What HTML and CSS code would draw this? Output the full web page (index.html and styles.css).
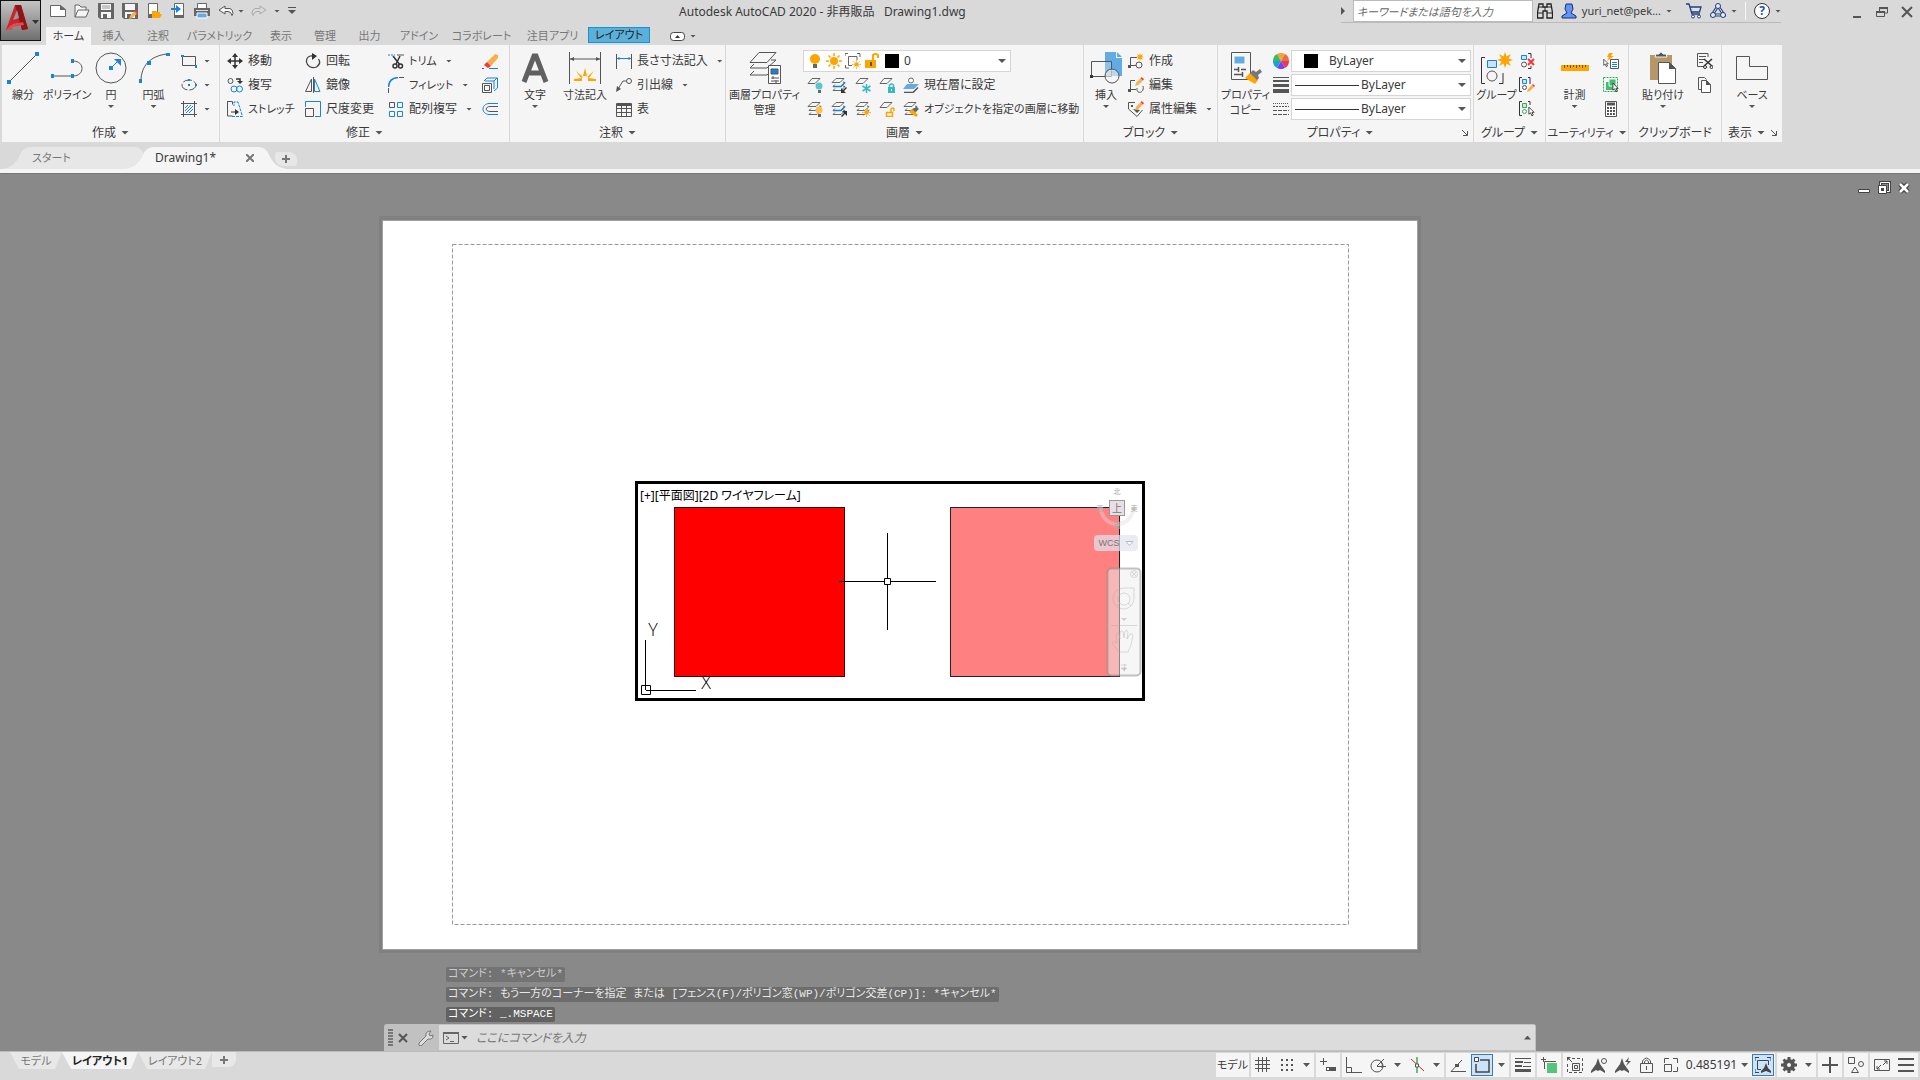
FILE: index.html
```html
<!DOCTYPE html>
<html lang="ja">
<head>
    <meta charset="UTF-8">
    <meta name="viewport" content="width=device-width, initial-scale=1.0">
    <title>Autodesk AutoCAD 2020 - Drawing1.dwg</title>
    <link rel="stylesheet" href="styles.css">
</head>
<body>

<!-- shared shapes -->
<svg class="defs" aria-hidden="true">
    <symbol id="sheets" viewBox="0 0 16 16"><path d="M5 1.5h8l-4 4H1zM12 5l2 .5-4 4H2l2-2M12 9l2 .5-4 4H2l2-2" fill="none" stroke="#666"/></symbol>
    <symbol id="pencil" viewBox="0 0 8 8"><path d="M0 8l1-3 4-4 2 2-4 4z" fill="#f7b04a"/><path d="M5 1l1-1 2 2-1 1z" fill="#f33"/></symbol>
    <symbol id="sun" viewBox="0 0 16 16"><circle cx="8" cy="8" r="4" fill="#ffa500"/><path d="M8 0v3M8 13v3M0 8h3M13 8h3M2.5 2.5l2 2M11.5 11.5l2 2M2.5 13.5l2-2M11.5 4.5l2-2" stroke="#ffa500" stroke-width="1.5"/></symbol>
    <symbol id="star" viewBox="0 0 16 16"><path d="M8 0l1.5 4.5L14 2l-2.500 4.5L16 8l-4.500 1.5L14 14l-4.500-2.500L8 16l-1.500-4.500L2 14l2.5-4.500L0 8l4.5-1.500L2 2l4.5 2.5z" fill="#ffa500"/></symbol>
    <symbol id="cursor" viewBox="0 0 8 11"><path d="M1 .5v8l2-1.500 1.5 3.5 1.5-1-1.500-3H7z" fill="#fff" stroke="#333"/></symbol>
</svg>

<header class="header">
    <button class="app-button" aria-label="アプリケーション メニュー">
        <svg width="38" height="38" viewBox="0 0 38 38"><path d="M4 28L13 3h6l7 24-6 1-2-7-7 1-2 6z" fill="#c8252c"/><path d="M13 3h6l7 24-6 1z" fill="#8f1419"/><path d="M15 8l-4 10 6-2z" fill="#999"/><path d="M4 28l5-5 12-3 1 3-11 2-2 3z" fill="#e04a4c"/><path d="M30 18h7l-3.500 4z" fill="#333"/></svg>
    </button>
    <div class="title-bar">
        <div class="quick-access">
            <button aria-label="クイック新規作成"><svg width="16" height="16" viewBox="0 0 16 16"><path d="M.5 2.5h10l5 4v7H.5z" fill="#fff" stroke="#666"/><path d="M10 2v5h6z" fill="#666"/></svg></button>
            <button aria-label="開く"><svg width="16" height="16" viewBox="0 0 16 16"><path d="M1 14V2h4l2 2h5v3M1 14L4 7h11l-3 7z" fill="#f5f5f5" stroke="#666"/></svg></button>
            <button aria-label="上書き保存"><svg width="16" height="16" viewBox="0 0 16 16"><path d="M0 0h16v16H2l-2-2z" fill="#666"/><path d="M3 1h10v6H3zM3 9h10v6H3z" fill="#f5f5f5"/><path d="M4 3h8M4 5h8" stroke="#999"/><path d="M5 11h4v4H5z" fill="#666"/></svg></button>
            <button aria-label="名前を付けて保存"><svg width="16" height="16" viewBox="0 0 16 16"><path d="M0 0h16v16H2l-2-2z" fill="#666"/><path d="M3 1h10v6H3zM3 9h10v6H3z" fill="#f5f5f5"/><path d="M5 11h4v4H5z" fill="#666"/><use href="#pencil" x="7" y="7" width="9" height="9"/></svg></button>
            <button aria-label="Web およびモバイルから開く"><svg width="16" height="16" viewBox="0 0 16 16"><path d="M2.5.5h9v14h-9z" fill="#fff" stroke="#666"/><path d="M2 11h10v4H2z" fill="#666"/><path d="M6 15V8h4l1 1h3v2h2l-2 4z" fill="#ffa500"/></svg></button>
            <button aria-label="Web およびモバイルに保存"><svg width="16" height="16" viewBox="0 0 16 16"><path d="M4.5.5h9v14h-9z" fill="#fff" stroke="#666"/><path d="M4 12h10v3H4z" fill="#666"/><path d="M1 5h5V2l5 4-5 4V7H1z" fill="#1583e0"/></svg></button>
            <button aria-label="印刷"><svg width="16" height="16" viewBox="0 0 16 16"><path d="M3.5.5h9v5h-9z" fill="#fff" stroke="#666"/><path d="M0 5h16v8H0z" fill="#666"/><path d="M2 7h12v1H2z" fill="#ddd"/><path d="M3 10h10v5H3z" fill="#62abe3" stroke="#fff"/></svg></button>
            <button aria-label="元に戻す"><svg width="16" height="16" viewBox="0 0 16 16"><path d="M1 7l6-4v2.5h5q3 1 3 5l-1 2q-1-4-4-4H7V11z" fill="#f5f5f5" stroke="#555"/></svg></button>
            <i class="caret"></i>
            <button class="redo" aria-label="やり直し"><svg width="16" height="16" viewBox="0 0 16 16"><path d="M15 7L9 3v2.5H4q-3 1-3 5l1 2q1-4 4-4h3V11z" fill="none" stroke="#aaa"/></svg></button>
            <i class="caret"></i>
            <button class="customize" aria-label="カスタマイズ"><svg width="8" height="8" viewBox="0 0 8 8"><path d="M0 .5h8" stroke="#555"/><path d="M0 3h8L4 7z" fill="#555"/></svg></button>
        </div>
        <h1 class="title">Autodesk AutoCAD 2020 - 非再販品 &nbsp;&nbsp;Drawing1.dwg</h1>
        <div class="info-center">
            <svg width="4" height="8" viewBox="0 0 4 8"><path d="M0 0l4 4-4 4z" fill="#555"/></svg>
            <input class="search" type="text" aria-label="検索" placeholder="キーワードまたは語句を入力">
            <button aria-label="検索"><svg width="16" height="16" viewBox="0 0 16 16"><path d="M2 1h4v3h4V1h4l1.5 9v5H10V8H6v7H.5v-5z" fill="#ddd" stroke="#222" stroke-width="1.3"/><path d="M1 10h5M10 10h5M2 4h4M10 4h4M8 4v4" stroke="#222"/></svg></button>
            <button class="account"><svg width="16" height="16" viewBox="0 0 16 16"><path d="M5 1h6l1 5-2 4 5 3v2H1v-2l5-3-2-4z" fill="#5f95f5" stroke="#1b2e70"/></svg>yuri_net@pek...<i class="caret"></i></button>
            <button aria-label="Autodesk App Store"><svg width="16" height="16" viewBox="0 0 16 16"><path d="M0 1h3l3 10h8M4 4h11l-1.500 5H5.5" fill="#dbe2f5" stroke="#243c78" stroke-width="1.3"/><circle cx="7" cy="13.5" r="1.5" fill="#fff" stroke="#243c78"/><circle cx="13" cy="13.5" r="1.5" fill="#fff" stroke="#243c78"/></svg></button>
            <button aria-label="接続"><svg width="16" height="16" viewBox="0 0 16 16"><path d="M8 3l6 9H2z" fill="none" stroke="#243c78" stroke-width="3"/><path d="M8 3l6 9H2z" fill="none" stroke="#e8eefc"/><circle cx="8" cy="3" r="2.5" fill="#e8eefc" stroke="#243c78"/><circle cx="3" cy="12" r="2.5" fill="#e8eefc" stroke="#243c78"/><circle cx="13" cy="12" r="2.5" fill="#e8eefc" stroke="#243c78"/></svg><i class="caret"></i></button>
            <span class="divider"></span>
            <button class="help" aria-label="ヘルプ"><span>?</span><i class="caret"></i></button>
        </div>
        <div class="window-buttons">
            <button aria-label="最小化"><svg width="12" height="12" viewBox="0 0 12 12"><path d="M2 11h8" stroke="#555" stroke-width="2"/></svg></button>
            <button aria-label="元に戻す"><svg width="12" height="12" viewBox="0 0 12 12"><path d="M3.5 5V2h8v5H9M.5 5.5h8v5h-8z" fill="none" stroke="#555"/><path d="M3 2h9M0 6h9" stroke="#555" stroke-width="2"/></svg></button>
            <button aria-label="閉じる"><svg width="12" height="12" viewBox="0 0 12 12"><path d="M1 1l10 10M11 1L1 11" stroke="#555" stroke-width="2"/></svg></button>
        </div>
    </div>
    <nav class="ribbon-tabs">
        <button class="active">ホーム</button>
        <button>挿入</button>
        <button>注釈</button>
        <button>パラメトリック</button>
        <button>表示</button>
        <button>管理</button>
        <button>出力</button>
        <button>アドイン</button>
        <button>コラボレート</button>
        <button>注目アプリ</button>
        <button class="context">レイアウト</button>
        <button class="toggle" aria-label="リボンを最小化"><svg width="15" height="9" viewBox="0 0 15 9"><rect x=".5" y=".5" width="14" height="8" rx="3" fill="#fff" stroke="#444"/><path d="M5 6h5L7.5 3z" fill="#333"/></svg><i class="caret"></i></button>
    </nav>
</header>

<main class="ribbon">
    <section class="panel draw">
        <div class="panel-body">
            <button class="big"><svg width="32" height="32" viewBox="0 0 32 32"><path d="M2 30L30 2" stroke="#555"/><path d="M0 28h4v4H0zM28 0h4v4h-4z" fill="#1583e0"/></svg>線分</button>
            <button class="big"><svg width="32" height="32" viewBox="0 0 32 32"><path d="M2 24h20M22 9c12 0 12 15 0 15" fill="none" stroke="#555"/><path d="M0 22h3v4H0zM20 22h3v4h-3zM20 7h3v4h-3z" fill="#1583e0"/></svg>ポリライン</button>
            <button class="big"><svg width="32" height="32" viewBox="0 0 32 32"><circle cx="16" cy="16" r="15" fill="none" stroke="#555"/><path d="M14 14h4v4h-4z" fill="#1583e0"/><path d="M17 15l6-6" stroke="#1583e0"/><path d="M19 7h7v7z" fill="#1583e0"/></svg>円<i class="caret"></i></button>
            <button class="big"><svg width="32" height="32" viewBox="0 0 32 32"><path d="M3 29C3 14 12 4 29 2" fill="none" stroke="#555"/><path d="M1 27h3v4H1zM9 9h4v4H9zM28 1h4v3h-4z" fill="#1583e0"/></svg>円弧<i class="caret"></i></button>
            <div class="stack">
                <button aria-label="長方形"><svg width="16" height="16" viewBox="0 0 16 16"><path d="M1.5 3.5h13v9h-13z" fill="none" stroke="#555"/><path d="M0 2h3v2H0zM14 12h2v3h-2z" fill="#1583e0"/></svg><i class="caret"></i></button>
                <button aria-label="楕円"><svg width="16" height="16" viewBox="0 0 16 16"><ellipse cx="8" cy="8" rx="7" ry="5" fill="none" stroke="#555" stroke-dasharray="9 2"/><path d="M7 2h2v2H7zM7 7h2v2H7zM14 7h2v2h-2z" fill="#1583e0"/></svg><i class="caret"></i></button>
                <button aria-label="ハッチング"><svg width="16" height="16" viewBox="0 0 16 16"><path d="M0 2.5h16M0 13.5h16M2.5 0v16M13.5 0v16" stroke="#555"/><path d="M4 7l3-3M4 10l6-6M5 12l7-7M8 12l4-4" stroke="#1583e0"/></svg><i class="caret"></i></button>
            </div>
        </div>
        <button class="panel-title">作成<i class="caret"></i></button>
    </section>

    <section class="panel modify">
        <div class="panel-body">
            <div class="stack">
                <button><svg width="16" height="16" viewBox="0 0 16 16"><path d="M8 2v12M2 8h12" stroke="#333" stroke-width="1.5"/><path d="M8 0l3 4H5zM8 16l3-4H5zM0 8l4-3v6zM16 8l-4-3v6z" fill="#333"/></svg>移動</button>
                <button><svg width="16" height="16" viewBox="0 0 16 16"><circle cx="3.5" cy="4" r="2.5" fill="none" stroke="#555"/><path d="M9 2h4v3" fill="none" stroke="#333" stroke-width="1.5"/><path d="M10 4h6l-3 3z" fill="#333"/><g fill="none" stroke="#1583e0"><circle cx="7" cy="12" r="3"/><circle cx="12.5" cy="12" r="3"/></g></svg>複写</button>
                <button class="kana"><svg width="16" height="16" viewBox="0 0 16 16"><path d="M.5.5h5v3M.5 0v15h5" fill="none" stroke="#555"/><path d="M5 15.500h10.500L11 1H7v4" fill="none" stroke="#1583e0" stroke-dasharray="3 1"/><path d="M4 11h4" stroke="#333"/><path d="M8 8l4 3-4 3z" fill="#333"/></svg>ストレッチ</button>
            </div>
            <div class="stack">
                <button><svg width="16" height="16" viewBox="0 0 16 16"><path d="M8 3C4 2 1 5 1.5 9s5 7 10 5c3-2 4-5 2-8" fill="none" stroke="#444" stroke-width="1.3"/><path d="M7 0l5 3-5 4z" fill="#333"/></svg>回転</button>
                <button><svg width="16" height="16" viewBox="0 0 16 16"><path d="M6.5 2v12.500h-6z" fill="none" stroke="#555"/><path d="M8.5 0v16" stroke="#555"/><path d="M9.5 2v12.500H15z" fill="none" stroke="#1583e0"/></svg>鏡像</button>
                <button><svg width="16" height="16" viewBox="0 0 16 16"><path d="M.5 6V.5h15v15H10" fill="none" stroke="#1583e0"/><path d="M.5 7.5h8v8h-8z" fill="none" stroke="#555"/></svg>尺度変更</button>
            </div>
            <div class="stack">
                <button class="kana"><svg width="16" height="16" viewBox="0 0 16 16"><path d="M0 2h7" stroke="#1583e0" stroke-dasharray="2 1"/><path d="M9 2h7" stroke="#555"/><path d="M5 3l7 9M12 3L8 11" stroke="#333" stroke-width="1.5"/><circle cx="7" cy="13" r="2" fill="none" stroke="#333" stroke-width="1.5"/><circle cx="12.5" cy="13" r="2" fill="none" stroke="#333" stroke-width="1.5"/></svg>トリム<i class="caret"></i></button>
                <button class="kana"><svg width="16" height="16" viewBox="0 0 16 16"><path d="M.5 16v-5M11 .5h5" stroke="#555"/><path d="M.5 10Q1 1 10 .5" fill="none" stroke="#1583e0" stroke-width="1.5"/></svg>フィレット<i class="caret"></i></button>
                <button><svg width="16" height="16" viewBox="0 0 16 16"><g fill="none" stroke="#1583e0"><path d="M9.5 1.500h5v5h-5zM1.5 10.500h5v5h-5zM9.5 10.500h5v5h-5z"/><path d="M1.5 1.500h5v5h-5z" stroke="#555"/></g></svg>配列複写<i class="caret"></i></button>
            </div>
            <div class="stack">
                <button aria-label="削除"><svg width="16" height="16" viewBox="0 0 16 16"><path d="M0 15.500h2" stroke="#555"/><path d="M7 15.500h9" stroke="#1583e0"/><path d="M5 9L13 1l3 1v3l-7 8z" fill="#f7b04a"/><path d="M2 12l3-3 4 4-3 2z" fill="#f33"/></svg></button>
                <button aria-label="分解"><svg width="16" height="16" viewBox="0 0 16 16"><path d="M.5 6.500h9v9h-9zM2.5 8.500h5v5h-5z" fill="none" stroke="#555"/><path d="M2 4l3-3h10.500v10L12 14M3 4h9l3-3M12 4v8" fill="none" stroke="#1583e0"/></svg></button>
                <button aria-label="オフセット"><svg width="16" height="16" viewBox="0 0 16 16"><path d="M16 2.500H7C-1 3-1 13 7 13.500h9" fill="none" stroke="#1583e0"/><path d="M16 5.500H8c-5 0-5 5 0 5h8" fill="none" stroke="#555"/></svg></button>
            </div>
        </div>
        <button class="panel-title">修正<i class="caret"></i></button>
    </section>

    <section class="panel annotate">
        <div class="panel-body">
            <button class="big"><svg width="32" height="32" viewBox="0 0 32 32"><path d="M5 30L15 4h2l10 26M8 21h16" fill="none" stroke="#606060" stroke-width="5"/></svg>文字<i class="caret"></i></button>
            <button class="big"><svg width="32" height="32" viewBox="0 0 32 32"><path d="M.5 0v32M31.500 0v32M1 7h30" stroke="#555"/><path d="M1 7l4-2v4zM31 7l-4-2v4z" fill="#555"/><path d="M16 16l2 8h-4zM7 19l7 6-2 1zM25 19l-7 6 2 1zM5 27l8-1v3H5zM27 27l-8-1v3h8z" fill="#ffa500"/></svg>寸法記入</button>
            <div class="stack">
                <button><svg width="16" height="16" viewBox="0 0 16 16"><path d="M.5 1v15M15.500 1v15" stroke="#555"/><path d="M1 5.500h14M3 4v3M13 4v3" stroke="#1583e0"/></svg>長さ寸法記入<i class="caret"></i></button>
                <button><svg width="16" height="16" viewBox="0 0 16 16"><circle cx="13" cy="4" r="2.5" fill="none" stroke="#555"/><path d="M10 4H7L2 12" fill="none" stroke="#555"/><path d="M0 15l1-6 4 3z" fill="#555"/></svg>引出線<i class="caret"></i></button>
                <button><svg width="16" height="16" viewBox="0 0 16 16"><path d="M.5 2.500h15v13H.5zM0 7.500h16M0 11.500h16M5.5 5v10M10.500 5v10" fill="none" stroke="#555"/><path d="M1 4h14" stroke="#555" stroke-width="2"/></svg>表</button>
            </div>
        </div>
        <button class="panel-title">注釈<i class="caret"></i></button>
    </section>

    <section class="panel layers">
        <div class="panel-body">
            <button class="big"><svg width="32" height="32" viewBox="0 0 32 32"><path d="M10 .5h17l-9 10H1zM22 8h5l-9 8H1l4-4M22 15h5l-9 8H1l4-4" fill="none" stroke="#555"/><path d="M19.500 13.500h12v18h-12z" fill="#fff" stroke="#555"/><path d="M22 17h7v5h-7z" fill="#1583e0" stroke="#555"/><path d="M22 26h8M22 29h8M24 24v3M27 28v3" stroke="#555"/></svg>画層プロパティ<br>管理</button>
            <div class="stack">
                <div class="field layer-field">
                    <svg width="16" height="16" viewBox="0 0 16 16"><circle cx="8" cy="6" r="5" fill="#ffa500"/><path d="M6 11h4v4H6z" fill="#666"/></svg>
                    <svg width="16" height="16"><use href="#sun"/></svg>
                    <svg width="16" height="16" viewBox="0 0 16 16"><path d="M3.5 3.500H12V7M3.5 3.500v9H7M0 3V.5h3M12 .5h3V4M.5 12v3H4" fill="none" stroke="#666"/><use href="#sun" x="7" y="7" width="9" height="9"/></svg>
                    <svg width="16" height="16" viewBox="0 0 16 16"><path d="M9 7V2q2-2 5 0v3" fill="none" stroke="#ffa500" stroke-width="2"/><path d="M1 7h11v8H1z" fill="#ffa500"/><path d="M6 9h2v4H6z" fill="#555"/></svg>
                    <span class="swatch"></span>
                    <select aria-label="画層"><option>0</option></select>
                    <i class="caret"></i>
                </div>
                <div class="tool-row">
                    <button aria-label="非表示"><svg width="16" height="16" viewBox="0 0 16 16"><path d="M5 1.500h8l-5 5H1z" fill="none" stroke="#666"/><circle cx="12" cy="9" r="3.5" fill="#5cc5d0"/><path d="M11 13h3v3h-3z" fill="#666"/></svg></button>
                    <button aria-label="選択表示"><svg width="16" height="16" viewBox="0 0 16 16"><use href="#sheets"/><path d="M2 9.500h8l4-4" fill="none" stroke="#1583e0" stroke-width="1.5"/><path d="M10 16v-5l2 2 3-3 1 1-3 3 2 2z" fill="#333"/></svg></button>
                    <button aria-label="フリーズ"><svg width="16" height="16" viewBox="0 0 16 16"><path d="M5 1.500h8l-5 5H1z" fill="none" stroke="#666"/><path d="M11.500 7v9M7.5 9l8 5M15.500 9l-8 5" stroke="#37b9c4" stroke-width="1.5"/></svg></button>
                    <button aria-label="ロック"><svg width="16" height="16" viewBox="0 0 16 16"><path d="M5 1.500h8l-5 5H1z" fill="none" stroke="#666"/><path d="M10.500 11V8q2-2 4 0v3" fill="none" stroke="#37b9c4" stroke-width="1.5"/><path d="M9 10h7v6H9z" fill="#37b9c4"/><path d="M12 12h1v2h-1z" fill="#fff"/></svg></button>
                    <button><svg width="16" height="16" viewBox="0 0 16 16"><path d="M4 7h12l-5 5H0z" fill="#62abe3"/><path d="M1 15.500h9l5-5" fill="none" stroke="#555" stroke-width="1.5"/><circle cx="8" cy="3.5" r="2.5" fill="#fff" stroke="#666"/></svg>現在層に設定</button>
                </div>
                <div class="tool-row">
                    <button aria-label="全画層表示"><svg width="16" height="16" viewBox="0 0 16 16"><use href="#sheets"/><circle cx="12" cy="9" r="3.5" fill="#ffbe52"/><path d="M11 13h3v3h-3z" fill="#666"/></svg></button>
                    <button aria-label="選択表示解除"><svg width="16" height="16" viewBox="0 0 16 16"><use href="#sheets"/><path d="M2 9.500h8l4-4" fill="none" stroke="#1583e0" stroke-width="1.5"/><path d="M16 10v5l-2-2-3 3-1-1 3-3-2-2z" fill="#333"/></svg></button>
                    <button aria-label="全画層フリーズ解除"><svg width="16" height="16" viewBox="0 0 16 16"><use href="#sheets"/><use href="#sun" x="7" y="7" width="9" height="9"/></svg></button>
                    <button aria-label="ロック解除"><svg width="16" height="16" viewBox="0 0 16 16"><path d="M5 1.500h8l-5 5H1z" fill="none" stroke="#666"/><path d="M12 11V8q2-2 3 0v2M7.5 11.500h6v4h-6z" fill="none" stroke="#ffa500" stroke-width="1.5"/></svg></button>
                    <button class="kana"><svg width="16" height="16" viewBox="0 0 16 16"><use href="#sheets"/><path d="M6 11l3-3 6 6-2 2z" fill="#ffa500"/><path d="M9 8l3 3 4-3-2-2z" fill="#666"/></svg>オブジェクトを指定の画層に移動</button>
                </div>
            </div>
        </div>
        <button class="panel-title">画層<i class="caret"></i></button>
    </section>

    <section class="panel block">
        <div class="panel-body">
            <button class="big"><svg width="32" height="32" viewBox="0 0 32 32"><path d="M15 0h11v6h6v18H15z" fill="#62abe3"/><path d="M27 0l5 5h-5z" fill="#62abe3"/><path d="M1.5 9.500h20v15h-20z" fill="#f5f5f5" fill-opacity=".3" stroke="#555"/><circle cx="22" cy="24" r="7" fill="#f5f5f5" fill-opacity=".6" stroke="#555"/><path d="M0 23h3v3H0z" fill="#333"/></svg>挿入<i class="caret"></i></button>
            <div class="stack">
                <button><svg width="16" height="16" viewBox="0 0 16 16"><path d="M9 4.500H2.5v8H8" fill="none" stroke="#555"/><circle cx="11" cy="12" r="3" fill="none" stroke="#555"/><path d="M0 12h3v3H0z" fill="#555"/><use href="#star" x="8" y="0" width="8" height="8"/></svg>作成</button>
                <button><svg width="16" height="16" viewBox="0 0 16 16"><path d="M7 3.500H2.5v9H8M15 9c2 7-7 9-6 2" fill="none" stroke="#555"/><path d="M0 12h3v3H0z" fill="#555"/><use href="#pencil" x="7" y="0" width="9" height="9"/></svg>編集</button>
                <button><svg width="16" height="16" viewBox="0 0 16 16"><path d="M7 1.500H.5V8L9 15.500 14.500 9" fill="none" stroke="#555"/><path d="M3 4h2v2H3zM5 8l4 4 3-3" fill="#555"/><use href="#pencil" x="7" y="0" width="9" height="9"/></svg>属性編集<i class="caret"></i></button>
            </div>
        </div>
        <button class="panel-title">ブロック<i class="caret"></i></button>
    </section>

    <section class="panel properties">
        <div class="panel-body">
            <button class="big"><svg width="32" height="32" viewBox="0 0 32 32"><path d="M1.5.5h19v27h-19z" fill="#f5f5f5" stroke="#555"/><path d="M4 4h11v8H4z" fill="#62abe3" stroke="#fff"/><path d="M4 17.500h5M11 17.500h5M4 22.500h8M8.5 15v5M12.500 20v5" stroke="#555" stroke-width="1.5"/><path d="M15 26l5-5 8 7-3 4z" fill="#ffa500"/><path d="M20 21l3-3 3 2 4-3 2 3-4 3 1 3-2 2z" fill="#777"/></svg>プロパティ<br>コピー</button>
            <div class="stack">
                <div class="field-row">
                    <svg width="16" height="16" viewBox="0 0 16 16"><path d="M8 8L4 1a8 8 0 018 0z" fill="#f9a13a"/><path d="M8 8l4-7a8 8 0 014 7z" fill="#ef6a3c"/><path d="M8 8h8a8 8 0 01-4 7z" fill="#e8395a"/><path d="M8 8l4 7a8 8 0 01-8 0z" fill="#7b3ff2"/><path d="M8 8l-4 7a8 8 0 01-4-7z" fill="#12a6d8"/><path d="M8 8H0a8 8 0 014-7z" fill="#3dbb58"/></svg>
                    <div class="field color-field"><span class="swatch"></span><select aria-label="オブジェクトの色"><option>ByLayer</option></select><i class="caret"></i></div>
                </div>
                <div class="field-row">
                    <svg width="16" height="16" viewBox="0 0 16 16"><path d="M0 .5h16" stroke="#555"/><path d="M0 4h16" stroke="#555" stroke-width="2"/><path d="M0 8.500h16" stroke="#555" stroke-width="3"/><path d="M0 14h16" stroke="#555" stroke-width="4"/></svg>
                    <div class="field"><span class="line-sample"></span><select aria-label="線の太さ"><option>ByLayer</option></select><i class="caret"></i></div>
                </div>
                <div class="field-row">
                    <svg width="16" height="16" viewBox="0 0 16 16"><path d="M0 2.500h16" stroke="#555" stroke-dasharray="1 1"/><path d="M0 5.500h16" stroke="#555" stroke-dasharray="2 1"/><path d="M0 9.500h16M0 13.500h16" stroke="#555" stroke-dasharray="4 1"/></svg>
                    <div class="field"><span class="line-sample"></span><select aria-label="線種"><option>ByLayer</option></select><i class="caret"></i></div>
                </div>
            </div>
        </div>
        <div class="panel-footer">
            <button class="panel-title">プロパティ<i class="caret"></i></button>
            <button class="launcher" aria-label="プロパティ パレット"><svg width="6" height="6" viewBox="0 0 6 6"><path d="M0 0l5 5M5.5 1v4.500H1" fill="none" stroke="#555"/></svg></button>
        </div>
    </section>

    <section class="panel group">
        <div class="panel-body">
            <button class="big"><svg width="32" height="32" viewBox="0 0 32 32"><path d="M4 5.500H.5v26H4M18 31.500h4V21" fill="none" stroke="#333"/><path d="M6.5 8.500h9v7h-9z" fill="#cbe1f5" stroke="#1583e0"/><circle cx="11" cy="24" r="5" fill="none" stroke="#555"/><use href="#star" x="16" y="0" width="16" height="16"/></svg>グループ</button>
            <div class="stack">
                <button aria-label="グループ解除"><svg width="16" height="16" viewBox="0 0 16 16"><path d="M2.5 2.500h5v4h-5z" fill="#cbe1f5" stroke="#1583e0"/><circle cx="5" cy="11.500" r="2.5" fill="none" stroke="#555"/><path d="M9 .5h3V5M9 15.500h3V13" fill="none" stroke="#333"/><path d="M9 6l6 6M15 6l-6 6" stroke="#f33" stroke-width="2"/></svg></button>
                <button aria-label="グループ編集"><svg width="16" height="16" viewBox="0 0 16 16"><path d="M3 .5H.5v14H3M9 .5h2V7" fill="none" stroke="#333"/><path d="M3.5 2.500h4v4h-4z" fill="#cbe1f5" stroke="#1583e0"/><circle cx="5.5" cy="10.500" r="2" fill="none" stroke="#555"/><use href="#pencil" x="8" y="7" width="8" height="8"/></svg></button>
                <button aria-label="グループ選択"><svg width="16" height="16" viewBox="0 0 16 16"><path d="M3 .5H.5v14H3M9 .5h2V4" fill="none" stroke="#333"/><path d="M3.5 2.500h4v4h-4z" fill="#c9ecd3" stroke="#2fae5b"/><circle cx="5.5" cy="10.500" r="2" fill="none" stroke="#2fae5b"/><use href="#cursor" x="9" y="5" width="7" height="11"/></svg></button>
            </div>
        </div>
        <button class="panel-title">グループ<i class="caret"></i></button>
    </section>

    <section class="panel utility">
        <div class="panel-body">
            <button class="big"><svg width="32" height="32" viewBox="0 0 32 32"><path d="M2 13h28v6H2z" fill="#ffa500"/><path d="M5.5 13v3M8.5 13v2M11.500 13v3M14.500 13v2M17.500 13v3M20.500 13v2M23.500 13v3M26.500 13v2" stroke="#7a5200"/></svg>計測<i class="caret"></i></button>
            <div class="stack">
                <button aria-label="クイック選択"><svg width="16" height="16" viewBox="0 0 16 16"><path d="M6 0h4L8 3h3L4 8l2-4H4z" fill="#ffa500"/><path d="M7.5 6.500h8v9h-8z" fill="#fff" stroke="#555"/><path d="M9 9.500h5M9 11.500h5M9 13.500h5" stroke="#1583e0"/><use href="#cursor" x="0" y="5" width="6" height="10"/></svg></button>
                <button aria-label="すべて選択"><svg width="16" height="16" viewBox="0 0 16 16"><path d="M.5.5h14v14H.5z" fill="none" stroke="#2fae5b" stroke-dasharray="2 1"/><path d="M3 5h7v8H3z" fill="#3fbf6e"/><path d="M6 2h7v7H6z" fill="#3fbf6e" stroke="#f5f5f5"/><use href="#cursor" x="9" y="5" width="7" height="11"/></svg></button>
                <button aria-label="計算機"><svg width="16" height="16" viewBox="0 0 16 16"><path d="M2.5.5h11v15h-11z" fill="#fff" stroke="#555"/><path d="M4 3h8" stroke="#555" stroke-width="3"/><path d="M4 7h8M4 10h8M4 13h8" stroke="#555" stroke-width="2" stroke-dasharray="2 1"/></svg></button>
            </div>
        </div>
        <button class="panel-title kana">ユーティリティ<i class="caret"></i></button>
    </section>

    <section class="panel clipboard">
        <div class="panel-body">
            <button class="big"><svg width="32" height="32" viewBox="0 0 32 32"><path d="M3 3h22v25H3z" fill="#b5976a"/><path d="M8 5l1-3h3q2-4 4 0h3l1 3z" fill="#555" stroke="#f5f5f5"/><path d="M11.500 10.500h11l6 6v15h-17z" fill="#fff" stroke="#555"/><path d="M22 10v7h7z" fill="#555"/></svg>貼り付け<i class="caret"></i></button>
            <div class="stack">
                <button aria-label="切り取り"><svg width="16" height="16" viewBox="0 0 16 16"><path d="M11 4V.5H.5v13H7M2 3.500h7M2 6.500h6M2 9.500h4" fill="none" stroke="#555"/><path d="M7 6l8 7M15 6l-8 7" stroke="#333" stroke-width="1.5"/><circle cx="8" cy="14" r="1.5" fill="none" stroke="#333"/><circle cx="14.500" cy="14" r="1.5" fill="none" stroke="#333"/></svg></button>
                <button aria-label="コピー"><svg width="16" height="16" viewBox="0 0 16 16"><path d="M5 12.500H1.5V.5h6l2 2" fill="none" stroke="#555"/><path d="M4.5 3.500h5l4 4v8h-9z" fill="#fff" stroke="#555"/><path d="M9 3v5h5z" fill="#555"/></svg></button>
            </div>
        </div>
        <div class="panel-title">クリップボード</div>
    </section>

    <section class="panel view">
        <div class="panel-body">
            <button class="big"><svg width="32" height="32" viewBox="0 0 32 32"><path d="M.5 4.500h13v10h18v13H.5z" fill="none" stroke="#555"/></svg>ベース<i class="caret"></i></button>
        </div>
        <div class="panel-footer">
            <button class="panel-title">表示<i class="caret"></i></button>
            <button class="launcher" aria-label="表示設定"><svg width="6" height="6" viewBox="0 0 6 6"><path d="M0 0l5 5M5.5 1v4.500H1" fill="none" stroke="#555"/></svg></button>
        </div>
    </section>
</main>

<nav class="file-tabs">
    <button class="file-tab kana">スタート</button>
    <button class="file-tab current">Drawing1*<svg width="8" height="8" viewBox="0 0 8 8"><path d="M0 0l8 8M8 0L0 8" stroke="#777" stroke-width="2"/></svg></button>
    <button class="new-tab" aria-label="新規図面"><svg width="8" height="8" viewBox="0 0 8 8"><path d="M0 4h8M4 0v8" stroke="#777" stroke-width="2"/></svg></button>
</nav>

<div class="canvas">
    <svg class="drawing" viewBox="0 173 1920 878">
        <!-- paper -->
        <rect x="379" y="216" width="1042" height="737" fill="#808080"/>
        <rect x="382" y="220" width="1036" height="730" fill="#a0a0a0"/>
        <rect x="383" y="221" width="1034" height="728" fill="#fff"/>
        <rect x="452.500" y="244.500" width="896" height="680" fill="none" stroke="#999" stroke-dasharray="4 2"/>

        <!-- viewport -->
        <rect x="636.500" y="482.500" width="507" height="217" fill="#fff" stroke="#000" stroke-width="3"/>
        <rect x="674.500" y="507.500" width="170" height="169" fill="#f00" stroke="#400"/>
        <rect x="950.500" y="507.500" width="169" height="169" fill="#ff8080" stroke="#222"/>
        <text class="viewport-label" x="640" y="500">[+][平面図][2D ワイヤフレーム]</text>

        <!-- crosshair -->
        <path d="M839 581.500h45M891 581.500h45M887.500 533v45M887.500 585v45M884.500 578.500h6v6h-6z" fill="none" stroke="#000"/>

        <!-- UCS icon -->
        <path d="M641.500 685.500h9v9h-9zM646 690.500h50M645.500 640v50" fill="none" stroke="#000"/>
        <text class="axis" x="653" y="636">Y</text>
        <text class="axis" x="706" y="689">X</text>

        <!-- view cube -->
        <path d="M1101 508a16 16 0 0032 0" fill="none" stroke="#ddd" stroke-opacity=".4" stroke-width="4"/>
        <rect x="1109.500" y="500.500" width="15" height="15" fill="#e8dfe6" stroke="#999"/>
        <text class="cube-face" x="1117" y="512">上</text>
        <text class="compass" x="1117" y="494">北</text>
        <text class="compass" x="1134" y="511">東</text>
        <text class="compass" x="1117" y="528">南</text>
        <text class="compass" x="1100" y="511">西</text>
        <foreignObject x="1094" y="535" width="44" height="16">
            <button class="wcs">WCS<svg width="9" height="5" viewBox="0 0 9 5"><path d="M1 .5h7l-3.500 4z" fill="#fff" stroke="#b5bac8"/></svg></button>
        </foreignObject>

        <!-- navigation bar -->
        <rect x="1107.500" y="568.500" width="33" height="107" rx="4" fill="#eee" fill-opacity=".5" stroke="#888" stroke-opacity=".5" stroke-width="2"/>
        <g fill="none" stroke="#aaa" stroke-opacity=".4">
            <circle cx="1134" cy="574" r="3.5"/><path d="M1132 572l4 4M1136 572l-4 4"/>
            <path d="M1124 588h10v10a10.500 10.500 0 11-10-10z"/><circle cx="1124" cy="599" r="6"/><path d="M1117 606l3-3M1131 606l-3-3"/>
            <path d="M1111 625.500h26"/>
            <path d="M1119 652l-7-9q1-3 5 0l-1-9q1-3 3 0l1 5v-7q2-3 3 0l1 6 1-7q2-2 3 1l-1 7 3-5q2-1 3 1l-2 10-3 7z"/>
            <path d="M1121 665h6M1121 668h6M1124.500 664v7"/>
        </g>
        <path d="M1121 618h6l-3 3zM1121 668h6l-3 3z" fill="#aaa" fill-opacity=".5"/>
    </svg>

    <div class="drawing-buttons">
        <button aria-label="最小化"><svg width="14" height="14" viewBox="0 0 14 14"><path d="M1.5 8.500h11v3h-11z" fill="#fff" stroke="#444"/></svg></button>
        <button aria-label="元に戻す"><svg width="14" height="14" viewBox="0 0 14 14"><path d="M3.5 4V1.500h9v9H10" fill="none" stroke="#444" stroke-width="3"/><path d="M3.5 4V1.500h9v9H10" fill="none" stroke="#fff"/><path d="M1.5 4.500h8v8h-8z" fill="#fff" stroke="#444"/><path d="M4 7h3v3H4z" fill="#444"/></svg></button>
        <button aria-label="閉じる"><svg width="14" height="14" viewBox="0 0 14 14"><path d="M3 3l8 8M11 3l-8 8" stroke="#444" stroke-width="5"/><path d="M3 3l8 8M11 3l-8 8" stroke="#fff" stroke-width="2.5"/></svg></button>
    </div>

    <div class="command">
        <div class="history">
            <p class="old">コマンド: *キャンセル*</p>
            <p>コマンド: もう一方のコーナーを指定 または [フェンス(F)/ポリゴン窓(WP)/ポリゴン交差(CP)]: *キャンセル*</p>
            <p class="latest">コマンド: _.MSPACE</p>
        </div>
        <div class="command-line">
            <span class="grip"></span>
            <button aria-label="閉じる"><svg width="10" height="10" viewBox="0 0 10 10"><path d="M1 1l8 8M9 1L1 9" stroke="#555" stroke-width="2"/></svg></button>
            <button aria-label="カスタマイズ"><svg width="16" height="16" viewBox="0 0 16 16"><path d="M1 13l7-7q-1-5 5-5l-2 3 1 2 3-1q0 5-5 4l-7 7q-3 0-2-3z" fill="#ddd" stroke="#777"/></svg></button>
            <div class="command-field">
                <svg width="16" height="12" viewBox="0 0 16 12"><path d="M.5.5h15v11H.5z" fill="none" stroke="#666"/><path d="M0 1h16" stroke="#666" stroke-width="2"/><path d="M3 4l3 2-3 2M7 9.500h4" fill="none" stroke="#666"/></svg>
                <i class="caret"></i>
                <input type="text" aria-label="コマンド" placeholder="ここにコマンドを入力">
                <i class="caret up"></i>
            </div>
        </div>
    </div>
</div>

<footer class="status-bar">
    <nav class="layout-tabs">
        <button>モデル</button>
        <button class="current">レイアウト1</button>
        <button>レイアウト2</button>
        <button class="add" aria-label="新規レイアウト"><svg width="8" height="8" viewBox="0 0 8 8"><path d="M0 4h8M4 0v8" stroke="#777" stroke-width="2"/></svg></button>
    </nav>
    <div class="status-tools">
        <div class="tools"><button class="space kana">モデル</button></div>
        <div class="tools">
            <button aria-label="グリッド"><svg width="16" height="16" viewBox="0 0 16 16"><path d="M0 3.500h15M0 7.500h15M0 11.500h15M3.5 0v15M7.5 0v15M11.500 0v15" stroke="#555"/></svg></button>
            <button aria-label="スナップ"><svg width="16" height="16" viewBox="0 0 16 16"><path d="M2 3h13M2 8h13M2 13h13" stroke="#555" stroke-width="2" stroke-dasharray="2 3"/></svg></button>
            <button class="drop" aria-label="スナップ設定"><i class="caret"></i></button>
        </div>
        <div class="tools"><button aria-label="ダイナミック入力"><svg width="16" height="16" viewBox="0 0 16 16"><path d="M0 4.500h7M3.5 1v7" stroke="#555"/><path d="M6 10h10v4H6z" fill="#555"/><path d="M7 11h2v2H7z" fill="#fff"/></svg></button></div>
        <div class="tools">
            <button aria-label="直交モード"><svg width="16" height="16" viewBox="0 0 16 16"><path d="M.5 0v15.500H16M.5 10.500h5v5" fill="none" stroke="#555"/></svg></button>
            <button aria-label="極トラッキング"><svg width="16" height="16" viewBox="0 0 16 16"><circle cx="7" cy="9" r="6" fill="none" stroke="#555"/><path d="M7 9.500h9M7 9l7-7M11 5q2 2 1 6" fill="none" stroke="#555"/></svg></button>
            <button class="drop" aria-label="角度設定"><i class="caret"></i></button>
            <button aria-label="アイソメ作図"><svg width="16" height="16" viewBox="0 0 16 16"><path d="M2 2l13 12" stroke="#d22"/><path d="M8 0v16" stroke="#2fae5b" stroke-width="1.5"/><path d="M6.5 7h3v3h-3z" fill="#fff" stroke="#555"/></svg></button>
            <button class="drop" aria-label="アイソメ設定"><i class="caret"></i></button>
        </div>
        <div class="tools">
            <button aria-label="オブジェクト スナップ トラッキング"><svg width="16" height="16" viewBox="0 0 16 16"><path d="M12 3L1 14.500h15" fill="none" stroke="#555"/><path d="M5 7h4v3H5z" fill="#555"/></svg></button>
            <button class="on" aria-label="オブジェクト スナップ"><svg width="16" height="16" viewBox="0 0 16 16"><path d="M6 3h9v12H2V7" fill="none" stroke="#444" stroke-width="1.5"/><path d="M.5.5h4v4h-4z" fill="#fff" stroke="#444"/></svg></button>
            <button class="drop" aria-label="スナップ一覧"><i class="caret"></i></button>
        </div>
        <div class="tools"><button aria-label="線の太さ"><svg width="16" height="16" viewBox="0 0 16 16"><path d="M0 1.500h16M9 5.500h7M8 9.500h8" stroke="#555"/><path d="M0 5h8M0 9h7" stroke="#555" stroke-width="2"/><path d="M0 13.500h16" stroke="#555" stroke-width="3"/></svg></button></div>
        <div class="tools"><button aria-label="選択の循環"><svg width="16" height="16" viewBox="0 0 16 16"><path d="M0 2.500h5M2.5 0v5M3.5 12V4.500H15" fill="none" stroke="#555"/><path d="M6 6h10v10H6z" fill="#55c57a"/></svg></button></div>
        <div class="tools">
            <button aria-label="注釈モニター"><svg width="16" height="16" viewBox="0 0 16 16"><path d="M5 1.500h10.500v14H.5V6" fill="none" stroke="#555" stroke-dasharray="3 2"/><path d="M5.5 6.500h7v7h-7zM7.5 8.500h3v3h-3z" fill="none" stroke="#555"/><path d="M0 0h4L0 4z" fill="#555"/><path d="M1 1l4 4" stroke="#555"/></svg></button>
            <button aria-label="注釈の表示"><svg width="16" height="16" viewBox="0 0 16 16"><path d="M7 1l2 6 5 7v2l-5-3-2 1-2-1-5 3v-2l5-7z" fill="#555"/><circle cx="13" cy="4" r="2.5" fill="#f5f5f5" stroke="#555"/></svg></button>
            <button aria-label="自動尺度"><svg width="16" height="16" viewBox="0 0 16 16"><path d="M7 1l2 6 5 7v2l-5-3-2 1-2-1-5 3v-2l5-7z" fill="#555"/><path d="M14 0l-4 5h3l-2 4 5-5h-3z" fill="#555"/></svg></button>
            <button aria-label="ビューポートをロック"><svg width="16" height="16" viewBox="0 0 16 16"><path d="M3.5 6V4q4-6 8 0v2M5.5 6V4.500q2-3 4 0V6M1.5 6.500h12v9h-12zM7.5 9v4" fill="none" stroke="#555"/></svg></button>
            <button aria-label="ビューポートを最大化"><svg width="16" height="16" viewBox="0 0 16 16"><path d="M1.5 6V1.500H6M10 1.500h4.500V6M14.500 10v4.500H10M1.5 7.500h7v7h-7z" fill="none" stroke="#555"/></svg></button>
            <button class="scale">0.485191<i class="caret"></i></button>
            <button class="on" aria-label="尺度の同期"><svg width="16" height="16" viewBox="0 0 16 16"><path d="M0 4V.5h4M12 .5h4V4M0 12v3.500h4M2.5 3.500h11V8M2.5 3.500v9H6" fill="none" stroke="#444"/><path d="M11 6l2 5 3 3v2l-5-2-5 2v-2l3-3z" fill="#444"/></svg></button>
        </div>
        <div class="tools">
            <button aria-label="ワークスペース"><svg width="16" height="16" viewBox="0 0 16 16"><circle cx="8" cy="8" r="4" fill="none" stroke="#555" stroke-width="4"/><path d="M8 0v3M8 13v3M0 8h3M13 8h3M2.5 2.500l2 2M11.500 11.500l2 2M2.5 13.500l2-2M11.500 4.500l2-2" stroke="#555" stroke-width="3"/></svg></button>
            <button class="drop" aria-label="ワークスペース一覧"><i class="caret"></i></button>
        </div>
        <div class="tools"><button aria-label="注釈を追加"><svg width="16" height="16" viewBox="0 0 16 16"><path d="M0 8h16M8 0v16" stroke="#555" stroke-width="2"/></svg></button></div>
        <div class="tools"><button aria-label="オブジェクトを選択表示"><svg width="16" height="16" viewBox="0 0 16 16"><path d="M.5.5h6v6h-6zM7 10l3.5 5.500h-7z" fill="none" stroke="#555"/><circle cx="13" cy="7" r="2.5" fill="none" stroke="#555"/></svg></button></div>
        <div class="tools">
            <button aria-label="フルスクリーン"><svg width="16" height="16" viewBox="0 0 16 16"><path d="M.5 2.500h15v11H.5z" fill="none" stroke="#555"/><path d="M9 8l4-4M10 4h3v3M7 8l-4 4M3 9v3h3" fill="none" stroke="#555"/></svg></button>
            <button aria-label="カスタマイズ"><svg width="16" height="16" viewBox="0 0 16 16"><path d="M0 2h16M0 8h16M0 14h16" stroke="#555" stroke-width="2"/></svg></button>
        </div>
    </div>
</footer>

</body>
</html>
```
FILE: styles.css
```css
* {
    box-sizing: border-box;
}
body {
    display: flex;
    flex-direction: column;
    height: 100vh;
    margin: 0;
    overflow: hidden;
    background: #d9d9d9;
    color: #3a3a3a;
    font-family: "Noto Sans", "Noto Sans CJK JP", sans-serif;
    font-size: 12px;
    font-feature-settings: "palt";
    line-height: 18px;
    white-space: nowrap;
}
button, input, select {
    margin: 0;
    padding: 0;
    border: none;
    background: none;
    color: inherit;
    font: inherit;
    font-feature-settings: inherit;
}
button {
    display: flex;
    align-items: center;
    justify-content: center;
    white-space: nowrap;
}
svg {
    display: block;
    flex: none;
}
.defs {
    position: absolute;
    width: 0;
    height: 0;
}
.kana {
    font-size: 11px;
}
.caret {
    flex: none;
    width: 6px;
    height: 3px;
    background: #555;
    clip-path: polygon(0 0, 100% 0, 50% 100%);
}
.caret.up {
    clip-path: polygon(0 100%, 100% 100%, 50% 0);
}

/* header */
.header {
    display: grid;
    grid-template-columns: 41px 1fr;
    grid-template-rows: 27px 18px;
}
.app-button {
    grid-row: 1 / 3;
    height: 41px;
    border: 1px solid #111;
    background: linear-gradient(#c4c4c4, #6f6f6f);
}
.title-bar {
    display: flex;
    align-items: flex-start;
}
.quick-access {
    display: flex;
    align-items: center;
    height: 22px;
    padding-left: 5px;
}
.quick-access button {
    width: 24px;
}
.quick-access .redo {
    width: 30px;
}
.quick-access .customize {
    width: 24px;
}
.title {
    flex: 1;
    margin: 0;
    padding-top: 3px;
    font-size: 12px;
    font-weight: normal;
    text-align: center;
}
.info-center {
    display: flex;
    align-items: center;
    gap: 8px;
    height: 23px;
    border-bottom: 1px solid #bbb;
}
.search {
    width: 180px;
    height: 22px;
    margin-right: -4px;
    padding: 0 3px;
    border: 1px solid #bbb;
    background: #fff;
    font-size: 11px;
    font-style: italic;
}
.search::placeholder {
    color: #666;
}
.info-center button {
    gap: 5px;
}
.info-center .account {
    padding-right: 6px;
    font-size: 11px;
}
.divider {
    width: 1px;
    height: 18px;
    background: #f5f5f5;
}
.help span {
    width: 16px;
    height: 16px;
    border: 1px solid #333;
    border-radius: 50%;
    background: #fff;
    color: #1c4fb0;
    font-weight: bold;
    line-height: 14px;
}
.window-buttons {
    display: flex;
    align-items: center;
    gap: 13px;
    height: 23px;
    margin-left: 70px;
    padding-right: 7px;
}

/* ribbon tabs */
.ribbon-tabs {
    display: grid;
    grid-template-columns: 45px 45px 44px 79px 44px 44px 45px 54px 71px 71px 62px 66px;
    padding-left: 5px;
    color: #777;
    font-size: 11px;
}
.ribbon-tabs button {
    padding-bottom: 2px;
}
.ribbon-tabs .active {
    background: #f5f5f5;
    color: #3a3a3a;
}
.ribbon-tabs .context {
    height: 16px;
    padding-bottom: 0;
    border: 1px solid #1592d4;
    background: #5bb0da;
    color: #222;
}
.ribbon-tabs .toggle {
    gap: 5px;
}

/* ribbon */
.ribbon {
    display: flex;
    gap: 1px;
    padding-left: 2px;
}
.panel {
    display: flex;
    flex: none;
    flex-direction: column;
    height: 97px;
    background: #f5f5f5;
}
.draw { width: 217px; }
.modify { width: 289px; }
.annotate { width: 215px; }
.layers { width: 357px; }
.block { width: 133px; }
.properties { width: 255px; }
.group { width: 71px; }
.utility { width: 82px; }
.clipboard { width: 92px; }
.view { width: 60px; }
.panel-body {
    display: grid;
    flex: 1;
    padding-top: 4px;
}
.draw .panel-body { grid-template-columns: 42px 46px 42px 43px 44px; }
.modify .panel-body { grid-template-columns: 78px 83px 94px 27px; padding-left: 7px; }
.annotate .panel-body { grid-template-columns: 50px 50px 115px; }
.layers .panel-body { grid-template-columns: 77px 280px; }
.block .panel-body { grid-template-columns: 44px 89px; }
.properties .panel-body { grid-template-columns: 55px 200px; }
.group .panel-body { grid-template-columns: 45px 26px; }
.utility .panel-body { grid-template-columns: 57px 25px; }
.clipboard .panel-body { grid-template-columns: 68px 24px; }
.big {
    flex-direction: column;
    justify-content: flex-start;
    padding-top: 3px;
    font-size: 11px;
    line-height: 15px;
}
.big svg {
    margin-bottom: 3px;
}
.big .caret {
    margin-top: 3px;
}
.stack {
    display: flex;
    flex-direction: column;
}
.stack button {
    justify-content: flex-start;
    gap: 5px;
    height: 24px;
}
.stack .caret {
    margin-left: 4px;
}
.draw .stack,
.annotate .stack {
    padding-left: 6px;
}
.draw .stack .caret {
    margin-left: 2px;
}
.panel-title {
    display: flex;
    flex: 1;
    align-items: center;
    justify-content: center;
    gap: 5px;
    max-height: 19px;
    min-height: 19px;
}
.panel-title .caret {
    width: 8px;
    height: 4px;
}
.panel-footer {
    display: flex;
    padding-right: 5px;
}
.field {
    display: flex;
    flex: 1;
    align-items: center;
    height: 22px;
    padding: 0 4px 0 3px;
    border: 1px solid #d5d5d5;
    background: #fff;
}
.field select {
    flex: 1;
    min-width: 0;
    appearance: none;
}
.field .caret {
    width: 8px;
    height: 4px;
}
.swatch {
    width: 14px;
    height: 14px;
    background: #000;
}
.layer-field {
    flex: none;
    gap: 3px;
    width: 208px;
    margin: 1px 0;
}
.layer-field .swatch {
    margin-left: 2px;
}
.layer-field select {
    padding-left: 2px;
}
.tool-row {
    display: flex;
    padding-left: 4px;
}
.tool-row button {
    min-width: 24px;
}
.field-row {
    display: flex;
    align-items: center;
    gap: 2px;
    height: 24px;
    padding-right: 2px;
}
.field-row select {
    padding-left: 2px;
}
.color-field {
    padding-left: 12px;
}
.color-field select {
    padding-left: 11px;
}
.line-sample {
    width: 64px;
    height: 1px;
    background: #333;
}

/* drawing file tabs */
.file-tabs {
    display: flex;
    align-items: flex-end;
    height: 31px;
    padding-left: 3px;
    border-bottom: 4px solid #f5f5f5;
}
.file-tab {
    justify-content: flex-start;
    width: 146px;
    height: 22px;
    padding-left: 29px;
    background: #e7e7e7;
    clip-path: path("M0 22Q12 20 17 8 20 0 28 0H132Q140 0 141 10 142 20 146 22Z");
    color: #777;
}
.file-tab.current {
    justify-content: space-between;
    width: 160px;
    margin-left: -23px;
    padding: 0 32px 0 29px;
    background: #f5f5f5;
    clip-path: path("M0 22Q12 20 17 8 20 0 28 0H132Q140 0 143 8 148 20 160 22Z");
    color: #3a3a3a;
}
.new-tab {
    align-self: center;
    width: 22px;
    height: 14px;
    margin-left: -11px;
    margin-top: 6px;
    border-radius: 3px 8px 3px 8px;
    background: #e7e7e7;
}

/* drawing area */
.canvas {
    position: relative;
    flex: 1;
    min-height: 0;
    background: #898989;
    box-shadow: inset 0 1px #777;
}
.drawing {
    width: 100%;
    height: 100%;
}
.viewport-label {
    fill: #000;
    font-size: 12px;
}
.axis {
    fill: #000;
    font-family: "Open Sans", sans-serif;
    font-size: 18px;
    font-weight: 300;
    text-anchor: middle;
}
.cube-face {
    fill: #777;
    font-size: 10px;
    text-anchor: middle;
}
.compass {
    fill: #aaa;
    font-size: 7px;
    text-anchor: middle;
}
.wcs {
    gap: 5px;
    width: 100%;
    height: 16px;
    border-radius: 4px;
    background: rgba(225, 228, 240, 0.7);
    color: #777;
    font-family: "Liberation Sans", sans-serif;
    font-size: 9px;
}
.drawing-buttons {
    position: absolute;
    top: 8px;
    right: 9px;
    display: flex;
    gap: 6px;
}
.command {
    position: absolute;
    bottom: 0;
    left: 20%;
    width: 60%;
}
.history {
    display: flex;
    flex-direction: column;
    align-items: flex-start;
    gap: 5px;
    margin-bottom: 2px;
    padding-left: 62px;
    font-family: "Liberation Mono", "Noto Sans CJK JP", monospace;
    font-size: 11px;
    line-height: 15px;
}
.history p {
    margin: 0;
    padding: 0 2px;
    border-radius: 2px;
    background: #6c6c6c;
    color: #e8e8e8;
}
.history .old {
    background: #737373;
    color: #ccc;
}
.history .latest {
    background: #626262;
    color: #fff;
}
.command-line {
    display: flex;
    align-items: center;
    height: 27px;
    padding: 1px 1px 1px 4px;
    border-radius: 3px 3px 0 0;
    background: #c1c1c1;
}
.command-line button {
    width: 26px;
}
.command-line .grip + button {
    width: 20px;
}
.grip {
    width: 5px;
    height: 17px;
    background: repeating-linear-gradient(#777 0 2px, #c1c1c1 2px 3px);
}
.command-field {
    display: flex;
    flex: 1;
    align-items: center;
    gap: 2px;
    height: 25px;
    padding: 0 4px;
    background: #dcdcdc;
}
.command-field .caret {
    width: 7px;
    height: 4px;
}
.command-field input {
    flex: 1;
    padding-left: 6px;
    font-style: italic;
}
.command-field input::placeholder {
    color: #777;
}

/* status bar */
.status-bar {
    display: flex;
    justify-content: space-between;
    height: 29px;
    border-top: 1px solid #bbb;
}
.layout-tabs {
    display: flex;
    align-items: flex-start;
    padding-left: 10px;
    color: #777;
    font-size: 11px;
}
.layout-tabs button {
    width: 52px;
    height: 17px;
    background: #e8e8e8;
    clip-path: polygon(0 0, 100% 0, calc(100% - 7px) 100%, 9px 100%);
}
.layout-tabs .current {
    width: 76px;
    background: #f5f5f5;
    color: #222;
    font-weight: bold;
}
.layout-tabs button:nth-child(3) {
    width: 74px;
}
.layout-tabs .add {
    width: 24px;
    height: 15px;
    border-radius: 0 0 8px 0;
    clip-path: none;
}
.status-tools {
    display: flex;
    gap: 2px;
    padding: 1px 2px 0 0;
}
.tools {
    display: flex;
    height: 24px;
    background: #f5f5f5;
}
.tools button {
    width: 24px;
}
.tools .drop {
    width: 15px;
}
.tools .space {
    width: 33px;
}
.tools .scale {
    gap: 4px;
    width: 68px;
}
.tools .on {
    width: 22px;
    height: 22px;
    margin: 1px;
    border: 1px solid #3b7bb5;
    background: #cce4fb;
}
.tools .caret {
    width: 7px;
    height: 4px;
}
```
